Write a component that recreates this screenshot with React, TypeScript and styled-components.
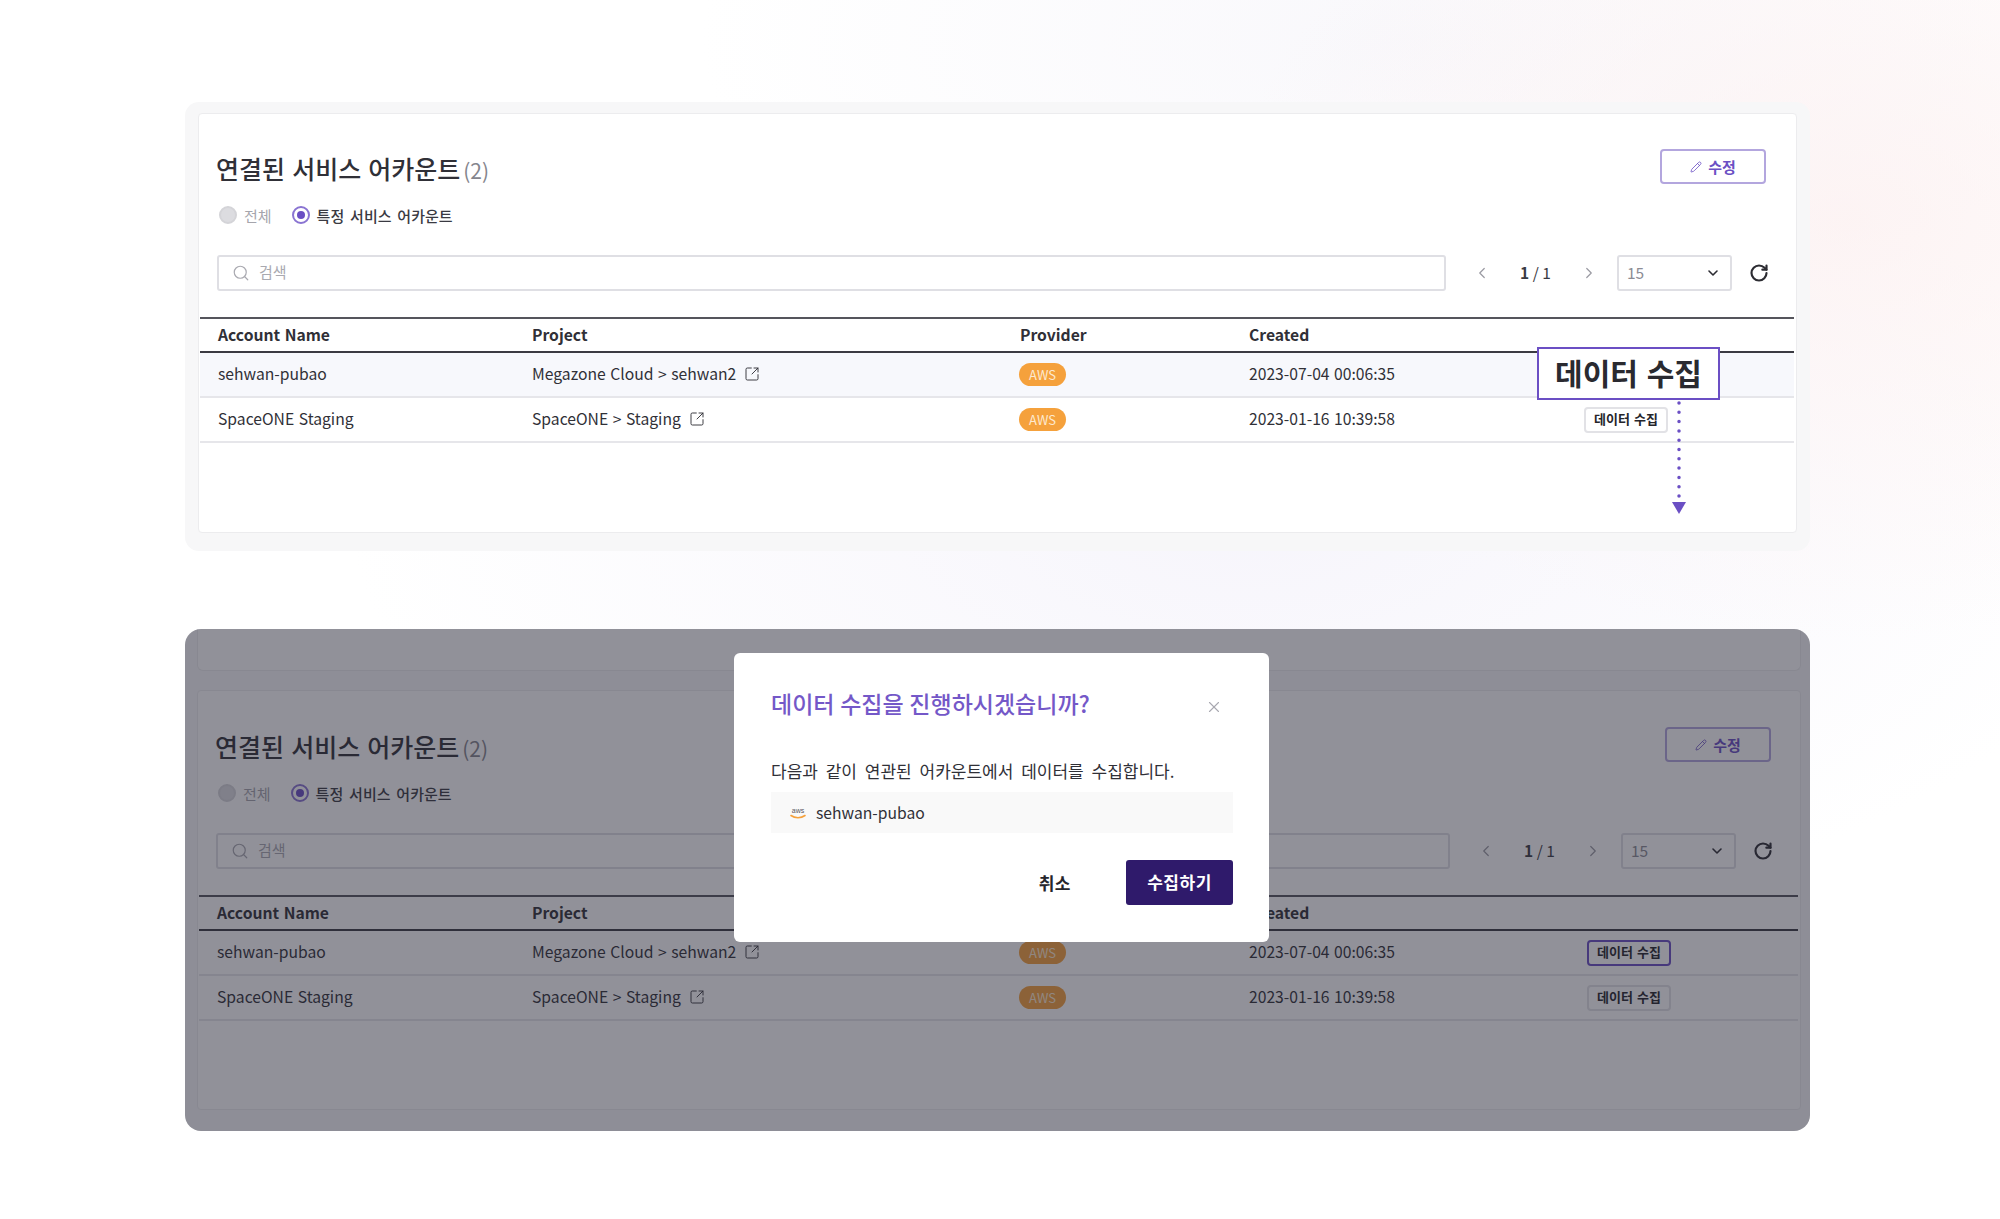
import React from 'react';
import styled, { createGlobalStyle } from 'styled-components';
import { ChevronDown, ChevronLeft, ChevronRight, Pencil, RotateCw, Search, SquareArrowOutUpRight, X } from 'lucide-react';

interface AccountRow {
  name: string;
  project: string;
  created: string;
}

interface AccountCardProps {
  highlightFirst?: boolean;
  focusFirst?: boolean;
  compact?: boolean;
  children?: React.ReactNode;
}

const ACCOUNTS: AccountRow[] = [
  { name: 'sehwan-pubao', project: 'Megazone Cloud > sehwan2', created: '2023-07-04 00:06:35' },
  { name: 'SpaceONE Staging', project: 'SpaceONE > Staging', created: '2023-01-16 10:39:58' },
];

const PURPLE = '#6b4fc4';
const FONT = `'Noto Sans CJK KR', 'Noto Sans', sans-serif`;

const GlobalStyle = createGlobalStyle`
  html, body {
    margin: 0;
    padding: 0;
  }
  body {
    background:
      radial-gradient(620px 420px at 1850px 220px, rgba(252, 240, 240, 0.75), transparent),
      radial-gradient(900px 420px at 1250px 520px, rgba(243, 241, 250, 0.7), transparent),
      radial-gradient(700px 300px at 1400px 40px, rgba(246, 245, 250, 0.7), transparent),
      #fff;
    font-family: ${FONT};
    color: #303037;
  }
  #root {
    height: 1219px;
    overflow: hidden;
  }
`;

const Page = styled.main`
  display: flex;
  flex-direction: column;
  gap: 78px;
  padding: 102px 0 0 185px;
  width: 1625px;
`;

const TopPanel = styled.section`
  background: #f7f7f8;
  border-radius: 14px;
  padding: 11px 13px 18px;
`;

const BottomPanel = styled.section`
  background: #f9f9fa;
  border-radius: 16px;
  box-sizing: border-box;
  display: flex;
  flex-direction: column;
  gap: 19px;
  height: 502px;
  overflow: hidden;
  padding: 0 9px 20px 12px;
  position: relative;
`;

const Strip = styled.div`
  background: #fff;
  border: 1px solid #ececee;
  border-radius: 0 0 6px 6px;
  border-top: 0;
  height: 41px;
`;

const Card = styled.div`
  background: #fff;
  border: 1px solid #ececee;
  border-radius: 4px;
  box-sizing: border-box;
  height: 420px;
  position: relative;
`;

const CardHeader = styled.div<{ $compact?: boolean }>`
  align-items: center;
  display: flex;
  height: 35px;
  justify-content: space-between;
  margin-top: ${(p) => (p.$compact ? '36px' : '35px')};
  padding: 0 ${(p) => (p.$compact ? '29px' : '30px')} 0 17px;
`;

const Title = styled.h2`
  font-size: 25px;
  font-weight: 500;
  margin: 2px 0 0;
  word-spacing: 1.5px;
`;

const Count = styled.span`
  color: #85858d;
  font-size: 21px;
  font-weight: 400;
  margin-left: 3px;
`;

const EditButton = styled.button`
  align-items: center;
  background: #fff;
  border: 2px solid #b3a6de;
  border-radius: 4px;
  color: ${PURPLE};
  display: flex;
  font-family: ${FONT};
  font-size: 15px;
  font-weight: 700;
  gap: 6px;
  height: 35px;
  justify-content: center;
  padding: 0;
  width: 106px;
`;

const RadioRow = styled.div`
  align-items: center;
  display: flex;
  gap: 20px;
  height: 20px;
  margin-top: 21px;
  padding-left: 20px;
`;

const RadioOption = styled.label<{ $checked?: boolean }>`
  align-items: center;
  color: ${(p) => (p.$checked ? '#3a3a42' : '#a5a5ac')};
  display: flex;
  font-size: 15px;
  font-weight: ${(p) => (p.$checked ? 500 : 400)};
  gap: 7px;
  word-spacing: 2.5px;
`;

const RadioDot = styled.span<{ $checked?: boolean }>`
  background: ${(p) => (p.$checked ? '#fff' : '#dcdce0')};
  border: 2px solid ${(p) => (p.$checked ? '#8a74d2' : '#d4d4d8')};
  border-radius: 50%;
  box-sizing: border-box;
  display: block;
  height: 18px;
  position: relative;
  width: 18px;

  &::after {
    background: ${PURPLE};
    border-radius: 50%;
    content: '';
    display: ${(p) => (p.$checked ? 'block' : 'none')};
    height: 8px;
    left: 3px;
    position: absolute;
    top: 3px;
    width: 8px;
  }
`;

const Toolbar = styled.div`
  align-items: center;
  display: flex;
  margin-top: 30px;
  padding: 0 27px 0 18px;
`;

const SearchBox = styled.div`
  align-items: center;
  border: 2px solid #dfdfe4;
  border-radius: 3px;
  box-sizing: border-box;
  color: #a9a9b0;
  display: flex;
  flex: 1;
  font-size: 15px;
  gap: 9px;
  height: 36px;
  padding-left: 13px;

  span {
    padding-bottom: 3px;
  }
`;

const Pager = styled.div`
  align-items: center;
  box-sizing: border-box;
  color: #9a9aa2;
  display: flex;
  justify-content: space-between;
  padding: 0 19px 0 27px;
  width: 171px;
`;

const PageText = styled.span`
  color: #3a3a42;
  font-size: 15.5px;
  padding-bottom: 2px;

  b {
    font-weight: 700;
  }
`;

const SizeSelect = styled.div`
  align-items: center;
  border: 2px solid #dfdfe4;
  border-radius: 3px;
  box-sizing: border-box;
  color: #8c8c94;
  display: flex;
  font-size: 15.5px;
  height: 36px;
  justify-content: space-between;
  padding: 0 9px 0 8px;
  width: 115px;

  span {
    padding-bottom: 3px;
  }
`;

const RefreshIcon = styled(RotateCw)`
  color: #2c2c32;
  margin-left: 17px;
`;

const Table = styled.div`
  margin: 26px 2px 0 1px;
`;

const Row = styled.div<{ $head?: boolean; $active?: boolean; $compact?: boolean }>`
  align-items: center;
  background: ${(p) => (p.$active ? '#f7f8fc' : 'transparent')};
  border-bottom: 2px solid ${(p) => (p.$head ? '#3b3b42' : '#e6e6ea')};
  border-top: ${(p) => (p.$head ? '2px solid #55555c' : '0')};
  box-sizing: border-box;
  display: grid;
  font-size: 15.7px;
  font-weight: ${(p) => (p.$head ? 700 : 400)};
  grid-template-columns: ${(p) => (p.$compact ? '315px 488px 229px 338px 1fr' : '314px 488px 229px 335px 1fr')};
  height: ${(p) => (p.$head ? '36px' : '45px')};
  padding-bottom: 2px;
  padding-left: 18px;
  word-spacing: 1px;
`;

const ProjectCell = styled.span`
  align-items: center;
  display: flex;
  gap: 8px;
`;

const Badge = styled.span`
  align-items: center;
  background: #f5a13c;
  border-radius: 12px;
  color: #fde9cf;
  display: flex;
  font-size: 13px;
  height: 23px;
  justify-content: center;
  margin: 2px 0 0 -1px;
  width: 47px;
`;

const CollectButton = styled.button<{ $focused?: boolean }>`
  background: #fff;
  border: 2px solid ${(p) => (p.$focused ? PURPLE : '#e2e2e6')};
  border-radius: 4px;
  box-sizing: border-box;
  color: #25252b;
  font-family: ${FONT};
  font-size: 13px;
  font-weight: 700;
  height: 26px;
  margin-top: 2px;
  padding: 0 0 2px;
  width: 84px;
  word-spacing: 1px;
`;

const Callout = styled.div`
  align-items: center;
  background: #fff;
  border: 2px solid ${PURPLE};
  box-sizing: border-box;
  color: #2a2a30;
  display: flex;
  font-size: 30px;
  font-weight: 700;
  height: 53px;
  justify-content: center;
  left: 1338px;
  padding-bottom: 3px;
  position: absolute;
  top: 233px;
  width: 183px;
  word-spacing: 2px;
`;

const CalloutArrow = styled.svg`
  left: 1472px;
  position: absolute;
  top: 286px;
`;

const Dim = styled.div`
  background: rgba(36, 36, 52, 0.5);
  inset: 0;
  position: absolute;
`;

const Dialog = styled.div`
  background: #fff;
  border-radius: 6px;
  box-sizing: border-box;
  height: 289px;
  left: 549px;
  padding: 33px 36px 0 37px;
  position: absolute;
  top: 24px;
  width: 535px;
`;

const DialogHead = styled.div`
  align-items: center;
  display: flex;
  justify-content: space-between;

  svg {
    margin: 8px 10px 0 0;
  }
`;

const DialogTitle = styled.h3`
  color: #7458c8;
  font-size: 23px;
  font-weight: 500;
  margin: 0;
  word-spacing: 0.5px;
`;

const DialogText = styled.p`
  font-size: 17px;
  margin: 38px 0 0;
  word-spacing: 4px;
`;

const AccountBox = styled.div`
  align-items: center;
  background: #f9f9f9;
  display: flex;
  font-size: 15.7px;
  gap: 9px;
  height: 41px;
  margin-top: 9px;
  padding-left: 18px;
`;

const DialogActions = styled.div`
  align-items: center;
  display: flex;
  gap: 55px;
  justify-content: flex-end;
  margin-top: 27px;
`;

const CancelButton = styled.button`
  background: none;
  border: 0;
  color: #25252b;
  font-family: ${FONT};
  font-size: 17px;
  font-weight: 700;
  letter-spacing: 0.5px;
  padding: 0;
`;

const ConfirmButton = styled.button`
  background: #2f1a6b;
  border: 0;
  border-radius: 3px;
  color: #fff;
  font-family: ${FONT};
  font-size: 17px;
  font-weight: 700;
  height: 45px;
  letter-spacing: 0.5px;
  padding: 0 0 2px;
  width: 107px;
`;

const AwsMark = () => (
  <svg width="18" height="14" viewBox="0 0 18 14" fill="none">
    <text x="9" y="7" textAnchor="middle" fontSize="7" fill="#55555c" fontFamily="'Liberation Sans', sans-serif">
      aws
    </text>
    <path d="M2 9.5c4 3 10 3 14 0" stroke="#f5a13c" strokeWidth="1.6" strokeLinecap="round" />
  </svg>
);

const AccountCard: React.FC<AccountCardProps> = ({ highlightFirst, focusFirst, compact, children }) => (
  <Card>
    <CardHeader $compact={compact}>
      <Title>
        연결된 서비스 어카운트
        <Count>(2)</Count>
      </Title>
      <EditButton>
        <Pencil size={12} strokeWidth={1.6} />
        수정
      </EditButton>
    </CardHeader>
    <RadioRow>
      <RadioOption>
        <RadioDot />
        전체
      </RadioOption>
      <RadioOption $checked>
        <RadioDot $checked />
        특정 서비스 어카운트
      </RadioOption>
    </RadioRow>
    <Toolbar>
      <SearchBox>
        <Search size={18} strokeWidth={1.6} />
        <span>검색</span>
      </SearchBox>
      <Pager>
        <ChevronLeft size={18} strokeWidth={1.6} />
        <PageText>
          <b>1</b> / 1
        </PageText>
        <ChevronRight size={18} strokeWidth={1.6} />
      </Pager>
      <SizeSelect>
        <span>15</span>
        <ChevronDown size={16} strokeWidth={2.4} color="#2c2c32" />
      </SizeSelect>
      <RefreshIcon size={20} strokeWidth={2.6} />
    </Toolbar>
    <Table>
      <Row $head $compact={compact}>
        <span>Account Name</span>
        <span>Project</span>
        <span>Provider</span>
        <span>Created</span>
      </Row>
      {ACCOUNTS.map((account, index) => (
        <Row key={account.name} $compact={compact} $active={highlightFirst && index === 0}>
          <span>{account.name}</span>
          <ProjectCell>
            {account.project}
            <SquareArrowOutUpRight size={16} strokeWidth={1.4} />
          </ProjectCell>
          <Badge>AWS</Badge>
          <span>{account.created}</span>
          {/* the callout covers this row's button in the highlighted card */}
          {!(highlightFirst && index === 0) && (
            <CollectButton $focused={focusFirst && index === 0}>데이터 수집</CollectButton>
          )}
        </Row>
      ))}
    </Table>
    {children}
  </Card>
);

const App: React.FC = () => (
  <>
    <GlobalStyle />
    <Page>
      <TopPanel>
        <AccountCard highlightFirst>
          <Callout>데이터 수집</Callout>
          <CalloutArrow width="16" height="116" viewBox="0 0 16 116">
            <line x1="8" y1="3" x2="8" y2="102" stroke={PURPLE} strokeWidth="3.5" strokeLinecap="round" strokeDasharray="0 9.3" />
            <path d="M1 102h14l-7 12z" fill={PURPLE} />
          </CalloutArrow>
        </AccountCard>
      </TopPanel>
      <BottomPanel>
        <Strip />
        <AccountCard focusFirst compact />
        <Dim />
        <Dialog>
          <DialogHead>
            <DialogTitle>데이터 수집을 진행하시겠습니까?</DialogTitle>
            <X size={18} strokeWidth={1.5} color="#a8a8b0" />
          </DialogHead>
          <DialogText>다음과 같이 연관된 어카운트에서 데이터를 수집합니다.</DialogText>
          <AccountBox>
            <AwsMark />
            sehwan-pubao
          </AccountBox>
          <DialogActions>
            <CancelButton>취소</CancelButton>
            <ConfirmButton>수집하기</ConfirmButton>
          </DialogActions>
        </Dialog>
      </BottomPanel>
    </Page>
  </>
);

export default App;
